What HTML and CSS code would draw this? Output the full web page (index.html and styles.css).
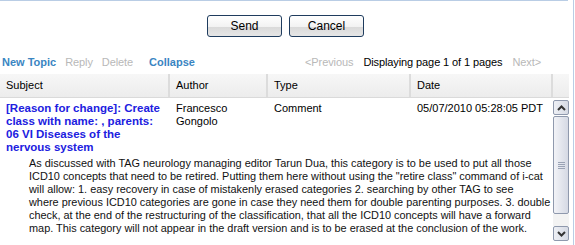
FILE: index.html
```html
<!DOCTYPE html>
<html lang="en">
<head>
    <meta charset="UTF-8">
    <title>Discussion</title>
    <link rel="stylesheet" href="styles.css">
</head>
<body>
    <div class="panel">
        <div class="actions">
            <button class="btn">Send</button>
            <button class="btn">Cancel</button>
        </div>

        <div class="toolbar">
            <a class="tool active">New Topic</a>
            <span class="tool">Reply</span>
            <span class="tool">Delete</span>
            <a class="tool active collapse">Collapse</a>
            <span class="pager">
                <span class="tool">&lt;Previous</span>
                <span class="status">Displaying page 1 of 1 pages</span>
                <span class="tool">Next&gt;</span>
            </span>
        </div>

        <div class="grid">
            <div class="head">
                <div class="col c-subject">Subject</div>
                <div class="col c-author">Author</div>
                <div class="col c-type">Type</div>
                <div class="col c-date">Date</div>
                <div class="col c-end"></div>
            </div>
            <div class="body">
                <div class="rows">
                    <div class="row">
                        <div class="cell c-subject"><a class="subject">[Reason for change]: Create class with name: , parents: 06 VI Diseases of the nervous system</a></div>
                        <div class="cell c-author">Francesco Gongolo</div>
                        <div class="cell c-type">Comment</div>
                        <div class="cell c-date">05/07/2010 05:28:05 PDT</div>
                    </div>
                    <p class="message">As discussed with TAG neurology managing editor Tarun Dua, this category is to be used to put all those<br>ICD10 concepts that need to be retired. Putting them here without using the "retire class" command of i-cat<br>will allow: 1. easy recovery in case of mistakenly erased categories 2. searching by other TAG to see<br>where previous ICD10 categories are gone in case they need them for double parenting purposes. 3. double<br>check, at the end of the restructuring of the classification, that all the ICD10 concepts will have a forward<br>map. This category will not appear in the draft version and is to be erased at the conclusion of the work.</p>
                </div>
                <div class="scrollbar">
                    <div class="sb-btn">
                        <svg width="9" height="6" viewBox="0 0 9 6"><path d="M1 5 L4.5 1.5 L8 5" fill="none" stroke="#333" stroke-width="2"/></svg>
                    </div>
                    <div class="sb-thumb">
                        <svg width="7" height="7" viewBox="0 0 7 7"><path d="M0 0.5H7M0 2.5H7M0 4.5H7M0 6.5H7" stroke="#9aa3b5" stroke-width="1"/></svg>
                    </div>
                    <div class="sb-track"></div>
                    <div class="sb-btn">
                        <svg width="9" height="6" viewBox="0 0 9 6"><path d="M1 1 L4.5 4.5 L8 1" fill="none" stroke="#333" stroke-width="2"/></svg>
                    </div>
                </div>
            </div>
        </div>
    </div>
</body>
</html>
```

FILE: styles.css
```css
body {
    margin: 0;
    font-family: "Liberation Sans", Arial, sans-serif;
    background-color: #fff;
}

.panel {
    width: 573px;
    height: 245px;
    border-right: 1px solid #b9cde5;
    overflow: hidden;
}

.panel::before {
    content: "";
    display: block;
    width: 568px;
    height: 1px;
    background-color: #b9cde5;
}

.actions {
    width: 571px;
    display: flex;
    justify-content: center;
    gap: 7px;
    padding-top: 14px;
}

.btn {
    width: 75px;
    height: 22px;
    padding: 0;
    font-family: "Liberation Sans", Arial, sans-serif;
    font-size: 12px;
    color: #000;
    border: 1px solid #1f3c5e;
    border-radius: 3px;
    background: linear-gradient(#ffffff, #f2f2f2 55%, #dadada 56%, #e6e6e6);
    cursor: pointer;
}

.toolbar {
    display: flex;
    align-items: center;
    height: 16px;
    margin-top: 17px;
    padding-left: 2px;
    font-size: 11px;
    letter-spacing: -0.1px;
    white-space: nowrap;
}

.tool {
    color: #b8b8b8;
    margin-right: 9px;
}

.tool.active {
    color: #3a85c2;
    font-weight: bold;
    letter-spacing: 0;
}

.collapse {
    margin-left: 7px;
}

.pager {
    margin-left: auto;
    margin-right: 32px;
    display: flex;
    gap: 10px;
}

.pager .tool {
    margin-right: 0;
}

.status {
    color: #000;
}

.grid {
    margin-top: 4px;
    width: 569px;
}

.head {
    display: flex;
    height: 23px;
    background: linear-gradient(#f7f7f7, #ececec);
    border-bottom: 1px solid #dadada;
    font-size: 11px;
}

.col {
    line-height: 23px;
    padding-left: 6px;
    border-right: 2px solid #dcdcdc;
    box-sizing: border-box;
}

.c-subject { width: 170px; }
.c-author { width: 98px; }
.c-type { width: 143px; }
.c-date { width: 142px; }
.c-end { flex: 1; border-right: none; }

.body {
    display: flex;
    height: 147px;
}

.rows {
    flex: 1;
    font-size: 11px;
    line-height: 13px;
}

.row {
    display: flex;
    padding-top: 4px;
}

.cell {
    padding-left: 6px;
    padding-right: 8px;
    box-sizing: border-box;
    color: #000;
}

.c-subject.cell {
    padding-right: 4px;
}

.subject {
    color: #2020e0;
    font-weight: bold;
    font-size: 11.5px;
}

.message {
    margin: 3px 0 0 29px;
    font-size: 10.9px;
    color: #111;
    white-space: nowrap;
}

.scrollbar {
    width: 16px;
    margin-top: 2px;
    display: flex;
    flex-direction: column;
    height: 141px;
}

.sb-btn {
    height: 15px;
    box-sizing: border-box;
    border: 1px solid #8f99ad;
    border-radius: 2px;
    background: linear-gradient(90deg, #eef0f5, #d6dae4);
    display: flex;
    align-items: center;
    justify-content: center;
}

.sb-thumb {
    height: 98px;
    margin-top: 1px;
    box-sizing: border-box;
    border: 1px solid #8f99ad;
    border-radius: 2px;
    background: linear-gradient(90deg, #f2f3f7, #d5d9e4);
    display: flex;
    align-items: center;
    justify-content: center;
}

.sb-track {
    flex: 1;
    background-color: #f3f3f3;
}
```
